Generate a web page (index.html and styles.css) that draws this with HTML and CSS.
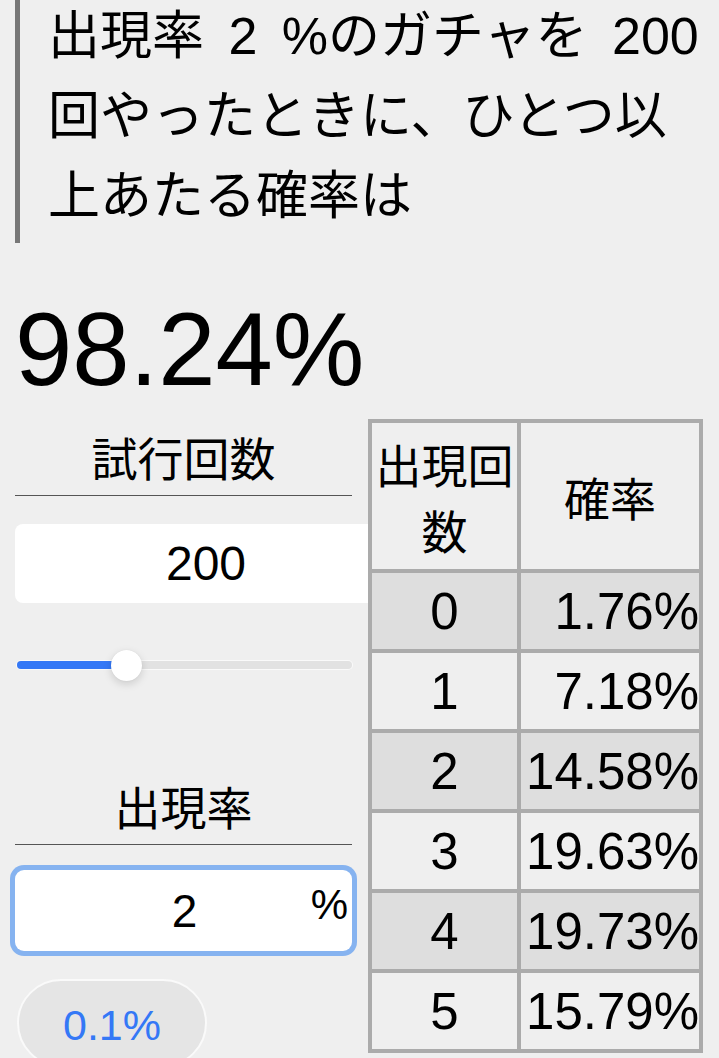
FILE: index.html
```html
<!DOCTYPE html>
<html lang="ja">
<head>
  <meta charset="UTF-8">
  <meta name="viewport" content="width=device-width, initial-scale=1.0">
  <title>ガチャ確率計算</title>
  <link rel="stylesheet" href="styles.css">
</head>
<body>
  <div class="page">
    <blockquote class="question">出現率 2 %のガチャを 200 回やったときに、ひとつ以上あたる確率は</blockquote>

    <div class="result">98.24%</div>

    <div class="main">
      <div class="controls">
        <div class="label">試行回数</div>
        <input type="text" class="count-input" value="200">
        <div class="slider">
          <div class="slider-fill" style="width: 110px;"></div>
          <div class="slider-thumb" style="left: 94px;"></div>
        </div>

        <div class="label">出現率</div>
        <div class="rate-field">
          <input type="text" class="rate-input" value="2">
          <span class="rate-unit">%</span>
        </div>
        <button class="preset">0.1%</button>
      </div>

      <table class="dist">
        <tr>
          <th class="col-count">出現回数</th>
          <th class="col-prob">確率</th>
        </tr>
        <tr class="shade"><td class="count">0</td><td class="prob">1.76%</td></tr>
        <tr><td class="count">1</td><td class="prob">7.18%</td></tr>
        <tr class="shade"><td class="count">2</td><td class="prob">14.58%</td></tr>
        <tr><td class="count">3</td><td class="prob">19.63%</td></tr>
        <tr class="shade"><td class="count">4</td><td class="prob">19.73%</td></tr>
        <tr><td class="count">5</td><td class="prob">15.79%</td></tr>
      </table>
    </div>
  </div>
</body>
</html>
```

FILE: styles.css
```css
body {
  margin: 0;
  background-color: #efefef;
  color: #000;
  font-family: "Liberation Sans", "Noto Sans CJK JP", sans-serif;
}
.page {
  padding-left: 15px;
  height: 1058px;
  overflow: hidden;
}
.question {
  margin: -4px 0 0;
  border-left: 5px solid #777;
  padding: 0 10px 7px 28px;
  font-size: 52px;
  line-height: 80px;
  word-spacing: 10px;
}
.result {
  margin-top: 55px;
  font-size: 103px;
  line-height: 103px;
}
.main {
  display: flex;
  align-items: flex-start;
  margin-top: 18px;
}
.controls {
  flex: none;
  width: 337px;
}
.label {
  box-sizing: border-box;
  height: 77px;
  padding-top: 6px;
  text-align: center;
  font-size: 46px;
  line-height: 70px;
  border-bottom: 1px solid #555;
}
.label + .rate-field {
  margin-top: 25px;
}
.count-input {
  display: block;
  box-sizing: border-box;
  width: 382px;
  height: 79px;
  margin-top: 28px;
  padding: 0;
  border: none;
  border-radius: 8px;
  background-color: #fff;
  font-family: inherit;
  font-size: 48px;
  text-align: center;
  color: #000;
}
.slider {
  position: relative;
  width: 335px;
  height: 8px;
  margin: 58px 0 99px 2px;
  border-radius: 4px;
  background-color: #e2e2e2;
  box-shadow: 0 0 0 1px #fafafa;
}
.slider-fill {
  height: 100%;
  border-radius: 4px;
  background-color: #3478f6;
}
.slider-thumb {
  position: absolute;
  top: -11px;
  width: 31px;
  height: 31px;
  border-radius: 50%;
  background-color: #fff;
  box-shadow: 0 3px 8px rgba(0, 0, 0, 0.15), 0 0 1px rgba(0, 0, 0, 0.1);
}
.rate-field {
  position: relative;
  height: 81px;
  border-radius: 9px;
  background-color: #fff;
  box-shadow: 0 0 0 5px #86b3f0;
}
.rate-input {
  box-sizing: border-box;
  width: 100%;
  height: 100%;
  padding: 0 0 0 2px;
  border: none;
  background: transparent;
  font-family: inherit;
  font-size: 46px;
  text-align: center;
  color: #000;
  outline: none;
}
.rate-unit {
  position: absolute;
  top: 14px;
  right: 4px;
  font-size: 42px;
  line-height: 42px;
}
.preset {
  display: block;
  width: 190px;
  height: 88px;
  margin: 28px 0 0 2px;
  padding: 4px 0 0;
  border: 2px solid #fafafa;
  border-radius: 44px;
  background-color: #e5e5e5;
  color: #3478f6;
  font-family: inherit;
  font-size: 43px;
}
.dist {
  position: relative;
  margin-left: 16px;
  border-collapse: collapse;
  border: 4px solid #ababab;
  background-color: #efefef;
}
.dist th,
.dist td {
  padding: 0;
  border: 4px solid #ababab;
}
.dist th {
  height: 146px;
  font-family: "Noto Sans CJK JP", sans-serif;
  font-size: 46px;
  font-weight: normal;
  line-height: 66px;
}
.col-count {
  width: 145px;
}
.col-prob {
  width: 178px;
}
.dist td {
  height: 76px;
  font-size: 51px;
}
.dist .shade td {
  background-color: #dedede;
}
.count {
  text-align: center;
}
.prob {
  text-align: right;
  padding-right: 3px;
}
```
